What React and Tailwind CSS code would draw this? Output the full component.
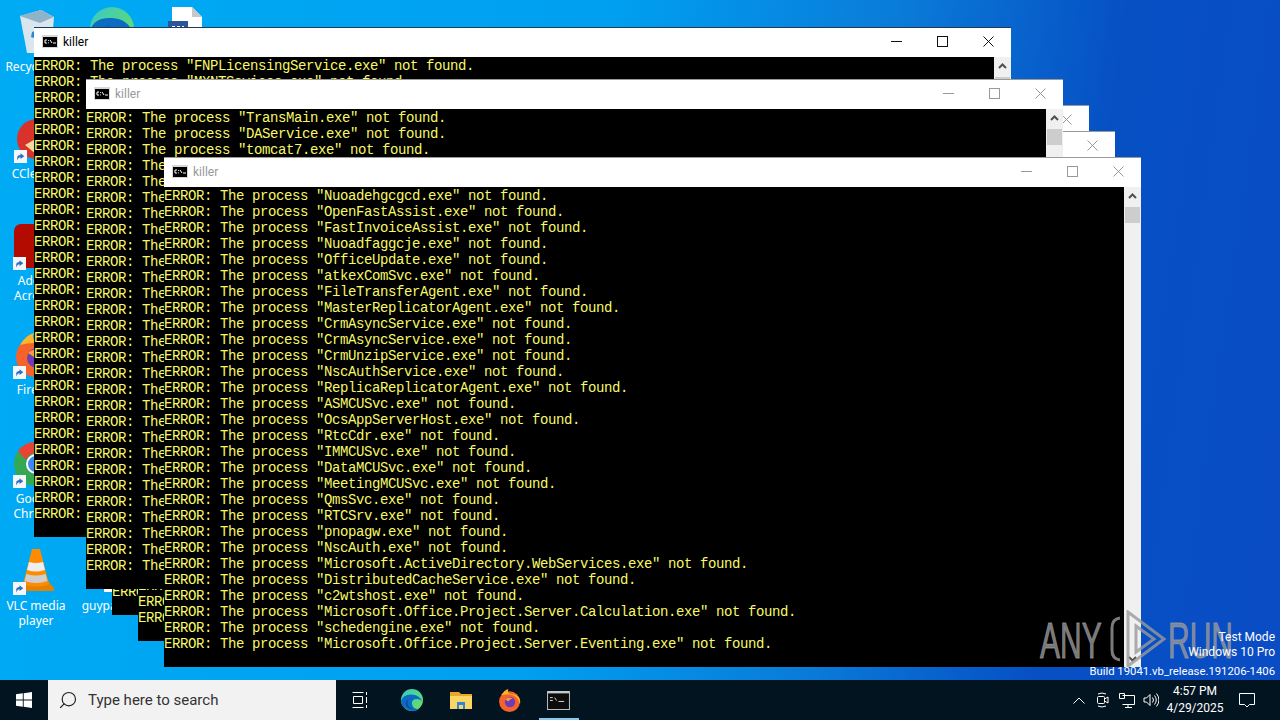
import { Search } from "lucide-react"

const UI_FONT = "font-['Roboto','Noto_Sans',sans-serif]"

const front = [
  "Nuoadehgcgcd", "OpenFastAssist", "FastInvoiceAssist", "Nuoadfaggcje", "OfficeUpdate", "atkexComSvc",
  "FileTransferAgent", "MasterReplicatorAgent", "CrmAsyncService", "CrmAsyncService", "CrmUnzipService",
  "NscAuthService", "ReplicaReplicatorAgent", "ASMCUSvc", "OcsAppServerHost", "RtcCdr", "IMMCUSvc", "DataMCUSvc",
  "MeetingMCUSvc", "QmsSvc", "RTCSrv", "pnopagw", "NscAuth", "Microsoft.ActiveDirectory.WebServices",
  "DistributedCacheService", "c2wtshost", "Microsoft.Office.Project.Server.Calculation", "schedengine",
  "Microsoft.Office.Project.Server.Eventing",
]

const fill = (names) => Array.from({ length: 29 }, (_, i) => names[i] || "Nuoadehgcgcd")

const CmdIcon = ({ className = "w-4 h-[13px]" }) => (
  <svg viewBox="0 0 16 13" className={className}>
    <rect width="16" height="13" fill="#d8d8d8" />
    <rect x="1" y="2" width="14" height="10" fill="#000" />
    <path d="M3 5h2M3 8h2M3 5v3M6.5 5v.8M6.5 7.5v.8M8 5l2 3M11 8h3" stroke="#fff" strokeWidth="1" fill="none" />
  </svg>
)

const Chevron = ({ down }) => (
  <svg viewBox="0 0 9 6" className={`w-[9px] h-[6px] ${down ? "rotate-180" : ""}`}>
    <path d="M1 5 4.5 1.5 8 5" stroke="#505050" strokeWidth="2" fill="none" />
  </svg>
)

const WinControls = ({ active }) => {
  const stroke = active ? "#111" : "#999"
  return (
    <div className="flex pb-0.5">
      <div className="w-[46px] flex items-center justify-center">
        <svg viewBox="0 0 11 11" className="w-[11px] h-[11px]"><path d="M0 5.5h11" stroke={stroke} /></svg>
      </div>
      <div className="w-[46px] flex items-center justify-center">
        <svg viewBox="0 0 11 11" className="w-[11px] h-[11px]"><rect x=".5" y=".5" width="10" height="10" stroke={stroke} fill="none" /></svg>
      </div>
      <div className="w-[46px] flex items-center justify-center">
        <svg viewBox="0 0 11 11" className="w-[11px] h-[11px]"><path d="M.5.5l10 10M10.5.5l-10 10" stroke={stroke} /></svg>
      </div>
    </div>
  )
}

const ConsoleWindow = ({ className, active, lines, thumb }) => (
  <div className={`absolute w-[977px] h-[510px] flex flex-col border-t bg-white ${active ? "border-[#1c3a5c]" : "border-[#9a9a9a]"} ${className}`}>
    <div className="h-[29px] shrink-0 flex items-center bg-white">
      <div className="ml-2 mr-[5px] pb-0.5"><CmdIcon /></div>
      <span className={`${UI_FONT} text-[12px] flex-1 pb-0.5 ${active ? "text-black" : "text-[#999]"}`}>killer</span>
      <WinControls active={active} />
    </div>
    <div className="flex-1 flex min-h-0">
      <div className="flex-1 bg-black overflow-hidden whitespace-pre font-['Liberation_Mono',monospace] text-[14px] tracking-[-0.4px] leading-4 text-[#f8f86a] pt-px">
        {lines.map((name, i) => (
          <div key={i} className="h-4">{`ERROR: The process "${name}.exe" not found.`}</div>
        ))}
      </div>
      <div className="w-[17px] bg-[#f0f0f0] flex flex-col items-center">
        <div className="h-[17px] flex items-center justify-center shrink-0"><Chevron /></div>
        <div className={`w-[15px] h-[16px] bg-[#cdcdcd] ${thumb}`} />
        <div className="flex-1" />
        <div className="h-[17px] flex items-center justify-center shrink-0"><Chevron down /></div>
      </div>
    </div>
  </div>
)

const ShortcutArrow = () => (
  <svg viewBox="0 0 12 12" className="absolute left-[1px] bottom-0 w-[13px] h-[13px]">
    <rect width="12" height="12" fill="#f4f6f8" />
    <path d="M3 10V7q0-2.5 3-2.5V3l3.5 2.7L6 8.4V6.8Q4 6.8 3 10z" fill="#2a6fc0" />
  </svg>
)

const DeskIcon = ({ className, label, shortcut, art }) => (
  <div className={`absolute w-[72px] flex flex-col items-center ${className}`}>
    <div className="relative w-12 h-12 flex items-center justify-center">
      {art}
      {shortcut && <ShortcutArrow />}
    </div>
    <span className="font-['Noto_Sans',sans-serif] text-[12px] leading-[15px] text-white text-center mt-[3px]">{label}</span>
  </div>
)

const EdgeArt = ({ className }) => (
  <svg viewBox="0 0 48 48" className={className}>
    <defs>
      <linearGradient id="edgeA" x1="0" y1="0" x2="1" y2="1">
        <stop offset="0" stopColor="#37c8c8" />
        <stop offset="1" stopColor="#6ee05a" />
      </linearGradient>
    </defs>
    <circle cx="24" cy="24" r="22" fill="url(#edgeA)" />
    <path d="M2 26Q6 12 24 13q16 1 21 15-4-7-13-6-9 1-8 10 1 9 13 11Q28 49 16 44 3 38 2 26z" fill="#0c6cc4" />
    <path d="M24 20q-8 0-9 8-1 10 10 14-9 0-13-8Q8 24 24 20z" fill="#0a4c9c" />
  </svg>
)

const FirefoxArt = ({ className }) => (
  <svg viewBox="0 0 48 48" className={className}>
    <circle cx="24" cy="26" r="20" fill="#f5632b" />
    <path d="M8 14q6-10 14-12-3 6 2 9 10 0 17 6 5 6 3 14Q40 14 24 12 14 12 8 14z" fill="#fcb52e" />
    <circle cx="25" cy="27" r="10" fill="#6d3cb6" />
    <path d="M16 22q6-6 14-2-6 1-8 6z" fill="#ff9a3c" />
  </svg>
)

const VlcArt = () => (
  <svg viewBox="0 0 38 48" className="w-[38px] h-12">
    <path d="M1 41 7 34h24l6 7q1 3-2 3H3q-3 0-2-3z" fill="#e58000" />
    <path d="M15 2h8l9 35q-13 5-26 0z" fill="#ff8c00" />
    <path d="M12 15q7 2 14 0l2 8q-9 3-18 0z" fill="#eee" />
    <path d="M9.500 27q9.500 3 19 0l2 7q-11.500 4-23 0z" fill="#cfcfcf" />
  </svg>
)

const DocArt = () => (
  <svg viewBox="0 0 36 48" className="w-9 h-12">
    <path d="M4 2h20l10 10v34H4z" fill="#fff" />
    <path d="M24 2v10h10z" fill="#c8c8c8" />
    <rect x="0" y="16" width="20" height="20" fill="#2b579a" />
    <path d="M4 22h3M9 22h3M14 22h2" stroke="#fff" strokeWidth="2" />
  </svg>
)

const WinLogo = () => (
  <svg viewBox="0 0 16 16" className="w-4 h-4">
    <path d="M0 2.300 6.800 1.300v6.300H0zM7.700 1.200 16 0v7.600H7.700zM0 8.400h6.800v6.300L0 13.700zM7.700 8.400H16V16l-8.300-1.200z" fill="#fff" />
  </svg>
)

const ExplorerArt = () => (
  <svg viewBox="0 0 24 24" className="w-6 h-6">
    <path d="M1 4h9l2 2h11v15H1z" fill="#e8a92a" />
    <path d="M1 8h22v13H1z" fill="#fcd664" />
    <path d="M8 14h8v7h-2v-4h-4v4H8z" fill="#2b88d8" />
  </svg>
)

const TrayIcons = () => (
  <>
    <div className="w-6 flex justify-center">
      <svg viewBox="0 0 12 7" className="w-3 h-[7px]"><path d="M.5 6.500 6 1l5.500 5.500" stroke="#fff" fill="none" /></svg>
    </div>
    <div className="w-6 flex justify-center">
      <svg viewBox="0 0 16 16" className="w-4 h-4" fill="none" stroke="#fff">
        <rect x="2.500" y="4.500" width="7" height="7" rx="1" />
        <path d="M9.500 7 13 5v6l-3.500-2M3 2q4-2 8 0M3 14q4 2 8 0" />
      </svg>
    </div>
    <div className="w-6 flex justify-center">
      <svg viewBox="0 0 16 16" className="w-4 h-4" fill="none" stroke="#fff">
        <path d="M3.500 3.500h12v9h-12M9 12.500v2.500M6 15.500h7M.5 1.500h5v5h-5z" />
      </svg>
    </div>
    <div className="w-6 flex justify-center">
      <svg viewBox="0 0 16 16" className="w-4 h-4" fill="none" stroke="#fff">
        <path d="M1 6h2.500L7 2.500v11L3.500 10H1zM9.500 5.500q2 2.500 0 5M11.500 3.500q3.500 4.500 0 9M13.500 1.500q5 6.500 0 13" />
      </svg>
    </div>
  </>
)

export default function App() {
  return (
    <div className="relative w-[1280px] h-[720px] overflow-hidden flex flex-col">
      <div className="relative flex-1 bg-[linear-gradient(98deg,#00abf4_0%,#009ff0_45%,#0a7ad8_66%,#0650c4_82%,#0a4cc4_100%)]">
        {/* desktop icons */}
        <DeskIcon
          className="left-[1px] top-[8px]"
          label="Recycle Bin"
          art={
            <svg viewBox="0 0 40 48" className="w-10 h-12">
              <path d="M3 8 24 2l13 7-3 36H10z" fill="#d9e6ee" />
              <path d="M3 8 24 2l13 7-14 6z" fill="#8fb3c9" />
              <path d="M15 24l6-2 4 5-5 4-6-2z" fill="#2b88d8" />
            </svg>
          }
        />
        <DeskIcon className="left-[76px] top-[5px]" label="" art={<EdgeArt className="w-12 h-12" />} />
        <DeskIcon className="left-[150px] top-[5px]" label="" art={<DocArt />} />
        <DeskIcon
          className="left-[1px] top-[115px]"
          label="CCleaner"
          shortcut
          art={
            <svg viewBox="0 0 48 48" className="w-12 h-12">
              <circle cx="24" cy="24" r="20" fill="#d8322a" />
              <path d="M12 30l14-8 12 8-14 10z" fill="#f4d9a0" />
            </svg>
          }
        />
        <DeskIcon
          className="left-0 top-[222px]"
          label={<>Adobe<br />Acrobat</>}
          shortcut
          art={
            <svg viewBox="0 0 48 48" className="w-12 h-12">
              <rect x="2" y="2" width="44" height="44" rx="7" fill="#b30b00" />
              <path d="M26 34q2-14 10-20" stroke="#fff" strokeWidth="2" fill="none" />
            </svg>
          }
        />
        <DeskIcon className="left-0 top-[331px]" label="Firefox" shortcut art={<FirefoxArt className="w-12 h-12" />} />
        <DeskIcon
          className="left-0 top-[440px]"
          label={<>Google<br />Chrome</>}
          shortcut
          art={
            <svg viewBox="0 0 48 48" className="w-12 h-12">
              <circle cx="24" cy="24" r="22" fill="#34a853" />
              <path d="M24 2a22 22 0 0 1 19 11H24a11 11 0 0 0-10 7L6 11A22 22 0 0 1 24 2z" fill="#ea4335" />
              <path d="M43 13a22 22 0 0 1-19 33l9-16a11 11 0 0 0 0-17z" fill="#fbbc04" />
              <circle cx="24" cy="24" r="9" fill="#4285f4" stroke="#fff" strokeWidth="2" />
            </svg>
          }
        />
        <DeskIcon className="left-0 top-[547px]" label={<>VLC media<br />player</>} shortcut art={<VlcArt />} />
        <DeskIcon className="left-[76px] top-[547px]" label="guypal.exe" art={<div className="w-4 h-[6px] bg-white mt-[36px]" />} />

        {/* console windows, back to front */}
        <ConsoleWindow className="left-[112px] top-[105px]" lines={fill([])} thumb="mt-[3px]" />
        <ConsoleWindow className="left-[138px] top-[131px]" lines={fill([])} thumb="mt-[3px]" />
        <ConsoleWindow
          className="left-[34px] top-[27px]"
          active
          lines={fill(["FNPLicensingService", "MXNTSsvices"])}
          thumb="mt-[3px]"
        />
        <ConsoleWindow
          className="left-[86px] top-[79px]"
          lines={fill(["TransMain", "DAService", "tomcat7"])}
          thumb="mt-[3px]"
        />
        <ConsoleWindow className="left-[164px] top-[157px]" lines={front} thumb="mt-[3px]" />

        {/* sandbox watermark sits over everything */}
        <div className="absolute left-[1040px] top-[610px] w-[200px] h-[58px] text-[#9a9a9a]/80 font-['Liberation_Sans',sans-serif]">
          <span className="absolute left-0 top-[6px] text-[50px] leading-[50px] origin-left scale-x-[0.6] [-webkit-text-stroke:1px_currentColor]">ANY</span>
          <svg viewBox="0 0 60 58" className="absolute left-[68px] top-0 w-[60px] h-[58px]" fill="none" stroke="currentColor" strokeWidth="3">
            <path d="M12 8Q4 9 4 18v22q0 9 8 10" />
            <path d="M20 2v54l36-27z" />
            <path d="M28 16v26l18-13z" />
          </svg>
          <span className="absolute left-[128px] top-[6px] text-[50px] leading-[50px] origin-left scale-x-[0.6] [-webkit-text-stroke:1px_currentColor]">RUN</span>
        </div>
        <div className={`absolute right-[5px] bottom-[1px] text-right text-white text-[12px] leading-[15px] ${UI_FONT}`}>
          <div>Test Mode</div>
          <div className="mb-1">Windows 10 Pro</div>
          <div className="text-[11.3px]">Build 19041.vb_release.191206-1406</div>
        </div>
      </div>

      {/* taskbar */}
      <div className={`h-10 shrink-0 bg-[#031421] flex items-stretch ${UI_FONT}`}>
        <div className="w-12 flex items-center justify-center"><WinLogo /></div>
        <div className="w-[288px] bg-[#f2f2f2] flex items-center">
          <Search className="w-5 h-5 ml-[10px] -scale-x-100 text-[#222]" strokeWidth={1.4} />
          <span className="ml-[10px] text-[15px] text-[#333]">Type here to search</span>
        </div>
        <div className="w-12 flex items-center justify-center">
          <svg viewBox="0 0 16 16" className="w-4 h-4" fill="none" stroke="#fff">
            <path d="M.5.500h11M.5 15.500h11M1.500 4.500h9v7h-9zM14.500 0v3M14.500 5v6M14.500 13v3" />
          </svg>
        </div>
        <div className="w-[49px] ml-[3px] flex items-center justify-center"><EdgeArt className="w-6 h-6" /></div>
        <div className="w-[49px] flex items-center justify-center"><ExplorerArt /></div>
        <div className="w-[49px] flex items-center justify-center"><FirefoxArt className="w-[25px] h-[25px]" /></div>
        <div className="relative w-[49px] flex items-center justify-center">
          <svg viewBox="0 0 24 20" className="w-[23px] h-[19px]">
            <rect width="24" height="20" fill="#c8c8c8" />
            <rect x="1" y="2.500" width="22" height="16.500" fill="#0c0c0c" />
            <path d="M3 7h3M3 10h3M8 7l2 3M12 11h6" stroke="#ddd" fill="none" />
          </svg>
          <div className="absolute bottom-0 left-[5px] w-[40px] h-[2px] bg-[#8ec6ea]" />
        </div>
        <div className="ml-auto flex items-center text-white">
          <TrayIcons />
          <div className="w-16 text-center text-[12px] leading-[17px]">
            <div>4:57 PM</div>
            <div>4/29/2025</div>
          </div>
          <div className="w-10 mr-[13px] flex justify-center">
            <svg viewBox="0 0 16 16" className="w-4 h-4" fill="none" stroke="#fff">
              <path d="M.5 1.500h15v11h-5L8 15l-2.500-2.500h-5z" />
            </svg>
          </div>
        </div>
      </div>
    </div>
  )
}
